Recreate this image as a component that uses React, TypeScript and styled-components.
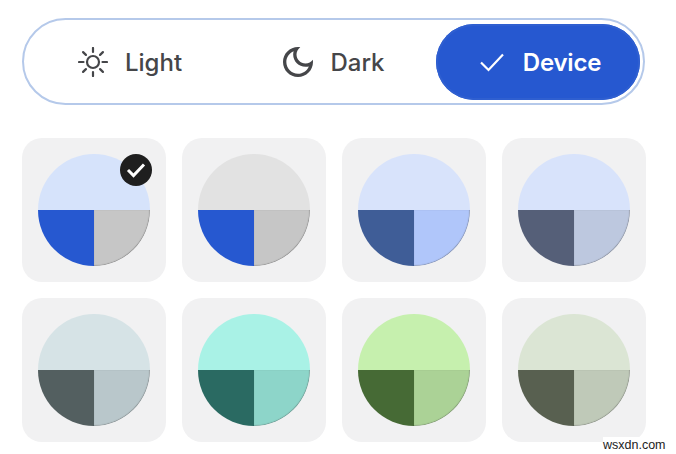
import styled, { createGlobalStyle } from 'styled-components'

const GlobalStyle = createGlobalStyle`
  html, body {
    margin: 0;
    background: #fff;
  }
`

const Page = styled.div`
  position: relative;
  width: 676px;
  height: 454px;
  overflow: hidden;
  box-sizing: border-box;
  padding: 18px 30px 0 22px;
  font-family: Inter, "Noto Sans", sans-serif;
`

const ModeBar = styled.div`
  display: grid;
  grid-template-columns: repeat(3, 204px);
  width: 623px;
  height: 87px;
  box-sizing: border-box;
  padding: 4px 3px 3px 4px;
  border: 2px solid #b5c9ea;
  border-radius: 44px;
`

const ModeButton = styled.div<{ $active?: boolean }>`
  display: flex;
  align-items: center;
  justify-content: center;
  gap: ${p => (p.$active ? '19px' : '17px')};
  padding-left: ${p => (p.$active ? '5px' : '0')};
  border-radius: 38px;
  font-size: 24px;
  font-weight: ${p => (p.$active ? 600 : 500)};
  letter-spacing: ${p => (p.$active ? '-0.2px' : '0')};
  color: ${p => (p.$active ? '#fff' : '#454649')};
  background: ${p => (p.$active ? '#2658d0' : 'transparent')};
  box-shadow: ${p => (p.$active ? 'inset 0 0 0 2px #2f5fd0' : 'none')};
`

const ThemeGrid = styled.div`
  display: grid;
  grid-template-columns: repeat(4, 144px);
  gap: 16px;
  margin-top: 33px;
`

const Tile = styled.div`
  position: relative;
  display: flex;
  align-items: center;
  justify-content: center;
  height: 144px;
  border-radius: 20px;
  background: #f1f1f2;
`

const Swatch = styled.div`
  display: grid;
  grid-template-columns: 1fr 1fr;
  grid-template-rows: 1fr 1fr;
  width: 112px;
  height: 112px;
  border-radius: 50%;
  overflow: hidden;
`

const SwatchTop = styled.div<{ $color: string }>`
  grid-column: 1 / 3;
  background: ${p => p.$color};
`

const SwatchLeft = styled.div<{ $color: string }>`
  background: ${p => p.$color};
`

const SwatchRight = styled.div<{ $color: string }>`
  background: ${p => p.$color};
  border-bottom-right-radius: 100%;
  box-shadow: inset -0.5px -0.5px 1px rgba(70, 70, 70, 0.5);
`

const Badge = styled.div`
  position: absolute;
  top: 16px;
  right: 14px;
  display: flex;
  align-items: center;
  justify-content: center;
  width: 32px;
  height: 32px;
  border-radius: 50%;
  background: #1f1f1f;
`

const Watermark = styled.div`
  position: absolute;
  left: 603px;
  top: 437px;
  font-family: "Liberation Sans", Arial, sans-serif;
  font-size: 12.5px;
  line-height: 16px;
  color: #222;
  background: #fff;
`

const SunIcon = () => (
  <svg width="30" height="30" viewBox="0 0 30 30" fill="none" stroke="#454649" strokeWidth="2.2" strokeLinecap="round">
    <circle cx="15" cy="15" r="6" />
    <path d="M15 1v4M15 25v4M1 15h4.500M24.500 15H29M5.100 5.100l2.800 2.800M22.100 22.100l2.800 2.800M24.900 5.100l-2.800 2.800M7.900 22.100l-2.800 2.800" />
  </svg>
)

const MoonIcon = () => (
  <svg width="40" height="40" viewBox="0 0 24 24" fill="#454649" style={{ margin: '0 -5px' }}>
    <path d="M9.370 5.510C9.190 6.150 9.100 6.820 9.100 7.500c0 4.080 3.320 7.400 7.400 7.400.680 0 1.350-.090 1.990-.270C17.450 17.190 14.930 19 12 19c-3.860 0-7-3.140-7-7 0-2.930 1.810-5.450 4.370-6.490zM12 3c-4.970 0-9 4.030-9 9s4.030 9 9 9 9-4.030 9-9c0-.460-.040-.920-.100-1.360-.980 1.370-2.580 2.260-4.400 2.260-2.980 0-5.400-2.420-5.400-5.400 0-1.810.890-3.420 2.260-4.400-.440-.060-.900-.100-1.360-.100z" />
  </svg>
)

const CheckIcon = () => (
  <svg width="24" height="20" viewBox="0 0 24 20" fill="none" stroke="#fff" strokeWidth="2.2">
    <path d="M1 10.500l7.500 7.500L23 2.500" />
  </svg>
)

const BadgeCheck = () => (
  <svg width="20" height="16" viewBox="0 0 20 16" fill="none" stroke="#fff" strokeWidth="3">
    <path d="M2 8l5.500 5.500L18 2.500" />
  </svg>
)

const themes = [
  ['#d6e3fb', '#2658d0', '#c6c6c6'],
  ['#e2e2e2', '#2658d0', '#c6c6c6'],
  ['#d8e3fb', '#3f5d97', '#b0c6fa'],
  ['#d8e3fb', '#555f78', '#bdc8df'],
  ['#d6e3e6', '#535f60', '#b9c7cb'],
  ['#a9f2e6', '#2a6a62', '#8dd5c9'],
  ['#c6f0ae', '#466a35', '#abd296'],
  ['#dbe5d4', '#586050', '#bfc9b8'],
]

export default function App() {
  return (
    <Page>
      <GlobalStyle />
      <ModeBar>
        <ModeButton><SunIcon />Light</ModeButton>
        <ModeButton><MoonIcon />Dark</ModeButton>
        <ModeButton $active><CheckIcon />Device</ModeButton>
      </ModeBar>
      <ThemeGrid>
        {themes.map(([top, left, right], i) => (
          <Tile key={i}>
            <Swatch>
              <SwatchTop $color={top} />
              <SwatchLeft $color={left} />
              <SwatchRight $color={right} />
            </Swatch>
            {i === 0 && <Badge><BadgeCheck /></Badge>}
          </Tile>
        ))}
      </ThemeGrid>
      <Watermark>wsxdn.com</Watermark>
    </Page>
  )
}
